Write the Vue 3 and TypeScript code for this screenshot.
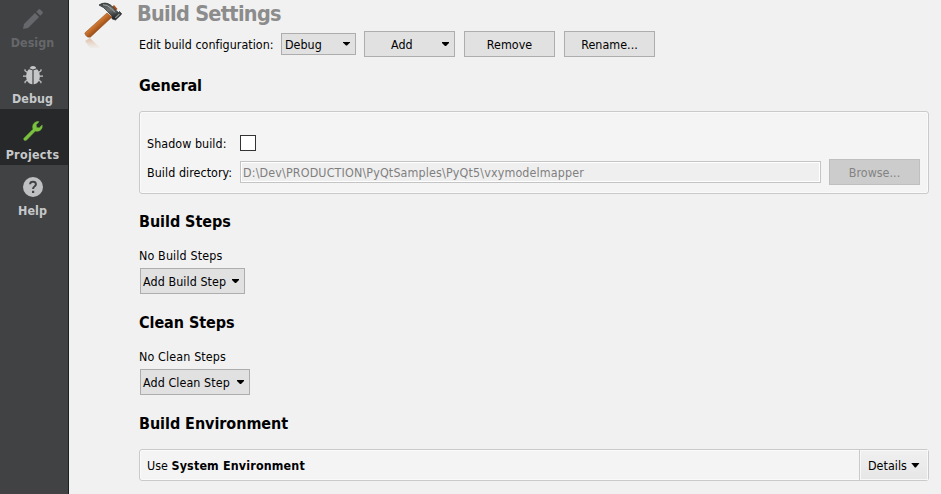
<script setup lang="ts">
interface Mode {
  id: string
  label: string
}
interface StepSection {
  title: string
  empty: string
  action: string
}

const modes: Mode[] = [
  { id: 'design', label: 'Design' },
  { id: 'debug', label: 'Debug' },
  { id: 'projects', label: 'Projects' },
  { id: 'help', label: 'Help' },
]
const steps: StepSection[] = [
  { title: 'Build Steps', empty: 'No Build Steps', action: 'Add Build Step' },
  { title: 'Clean Steps', empty: 'No Clean Steps', action: 'Add Clean Step' },
]
const buildDirectory = 'D:\\Dev\\PRODUCTION\\PyQtSamples\\PyQt5\\vxymodelmapper'
</script>

<template>
  <div class="window">
    <nav class="modes">
      <div v-for="m in modes" :key="m.id" class="mode" :class="m.id">
        <svg class="mode-icon" viewBox="0 0 24 24" width="24" height="24">
          <template v-if="m.id === 'design'">
            <path d="M2 22 3 17 14 6 18 10 7 21ZM15.3 4.7 17.6 2.4Q18.4 1.7 19.2 2.4L21.6 4.8Q22.3 5.6 21.6 6.4L19.3 8.7Z" fill="#66676a" />
          </template>
          <template v-else-if="m.id === 'debug'">
            <path d="M8.6 5.3A3.6 3.6 0 0 1 15.4 5.3L12 6.5Z" fill="#c4c6c8" />
            <path d="M11.4 7.3V21.3C7.2 20.7 5.2 17.7 5.2 13.5Q5.2 8.5 8 6.2ZM12.6 7.3V21.3C16.8 20.7 18.8 17.7 18.8 13.5Q18.8 8.5 16 6.2Z" fill="#c4c6c8" />
            <path d="M6.8 9.8 4 7.8V6.2M6 13.2H2M6.8 17 4.1 18.6V20.2M17.2 9.8 20 7.8V6.2M18 13.2H22M17.2 17 19.9 18.6V20.2" fill="none" stroke="#c4c6c8" stroke-width="1.2" />
          </template>
          <template v-else-if="m.id === 'projects'">
            <path d="M3.2 19 12 10.2C11.2 7.2 11.8 4.8 14 3.4Q15.8 2.2 18 2.7L15.1 5.8 15.6 8.4 18.2 8.9 21.2 6Q21.8 9.2 19.4 11.2 17.4 12.9 14.3 12.1L5.6 21.1Q4.3 22.1 3.1 21 2 19.9 3.2 19Z" fill="#7ac13e" stroke="#7ac13e" stroke-width=".5" />
          </template>
          <template v-else>
            <circle cx="12" cy="12" r="10" fill="#bec0c2" />
            <path d="M9.1 9.2Q9.2 6.8 12 6.8T14.9 9.2Q14.9 10.5 13.4 11.5 12.1 12.3 12.1 14" fill="none" stroke="#404244" stroke-width="2" />
            <rect x="11" y="15.8" width="2.2" height="2.2" fill="#404244" />
          </template>
        </svg>
        <span class="mode-label">{{ m.label }}</span>
      </div>
    </nav>

    <aside class="tool">
      <svg viewBox="0 0 42 50" width="42" height="50">
        <defs>
          <linearGradient id="wood" x1="0" y1="0" x2="1" y2="1">
            <stop offset=".25" stop-color="#efa258" />
            <stop offset=".48" stop-color="#c26b28" />
            <stop offset=".7" stop-color="#76330d" />
          </linearGradient>
          <linearGradient id="steel" x1="0" y1="0" x2=".4" y2="1">
            <stop offset="0" stop-color="#383b3c" />
            <stop offset=".5" stop-color="#6e7372" />
            <stop offset="1" stop-color="#202426" />
          </linearGradient>
          <linearGradient id="mirror" x1="0" y1="0" x2="0" y2="1">
            <stop offset="0" stop-color="#c98a5c" stop-opacity=".5" />
            <stop offset="1" stop-color="#d9a47d" stop-opacity=".05" />
          </linearGradient>
        </defs>
        <path d="M3 41 8 38 18 48H8Z" fill="url(#mirror)" />
        <path d="M2.8 33 25 13 30 17 8.5 37Q4 38 2.8 33Z" fill="url(#wood)" stroke="#94501f" stroke-width=".6" />
        <path d="M29 8 32 5 35.5 9 32 12Z" fill="#a84f18" />
        <path d="M17 5Q23 1 29 5.3L33.5 10 36.5 12.5 37.5 11.5 39.7 14 33.5 20 30 18.8 30 16 25.5 11.5Q22 7 17 5Z" fill="url(#steel)" stroke="#303334" stroke-width=".8" />
        <path d="M21 4.8Q25 4.3 29 8.3L33 12.4" fill="none" stroke="#a8acac" stroke-width="1" />
        <path d="M33.2 18 37.5 14" stroke="#8d9292" stroke-width="1.1" />
      </svg>
    </aside>

    <main class="page">
      <h1>Build Settings</h1>
      <div class="config">
        <span class="config-label">Edit build configuration:</span>
        <button class="btn select">Debug<i class="arrow"></i></button>
        <button class="btn wide add"><span>Add</span><i class="arrow"></i></button>
        <button class="btn wide">Remove</button>
        <button class="btn wide">Rename...</button>
      </div>

      <h2 class="low">General</h2>
      <section class="group general">
        <div class="field check-row">
          <label>Shadow build:</label>
          <span class="checkbox"></span>
        </div>
        <div class="field">
          <label>Build directory:</label>
          <div class="path">{{ buildDirectory }}</div>
          <button class="btn wide browse" disabled>Browse...</button>
        </div>
      </section>

      <template v-for="s in steps" :key="s.title">
        <h2>{{ s.title }}</h2>
        <p class="empty">{{ s.empty }}</p>
        <button class="btn step">{{ s.action }}<i class="arrow"></i></button>
      </template>

      <h2>Build Environment</h2>
      <section class="group env">
        <div class="summary">Use <b>System Environment</b></div>
        <div class="details">Details<i class="arrow"></i></div>
      </section>
    </main>
  </div>
</template>

<style>
body {
  margin: 0;
  overflow: hidden;
}
</style>

<style scoped>
.window {
  display: flex;
  width: 941px;
  height: 494px;
  overflow: hidden;
  background: #f1f1f1;
  color: #000;
  font: 12.4px/16px 'DejaVu Sans Condensed', 'DejaVu Sans', sans-serif;
  font-stretch: condensed;
  letter-spacing: 0.03px;
  white-space: nowrap;
}
.modes {
  box-sizing: border-box;
  flex: none;
  width: 69px;
  height: 494px;
  border-right: 1px solid #1e1f20;
  background: #404244;
}
.mode {
  display: flex;
  flex-direction: column;
  align-items: center;
  box-sizing: border-box;
  width: 68px;
  height: 56px;
  padding: 10px 3px 0 0;
  color: #c6c8ca;
}
.mode:first-child {
  height: 53px;
  padding-top: 7px;
}
.mode.design {
  color: #66676a;
}
.mode.projects {
  background: #262829;
}
.mode-icon {
  display: block;
  flex: none;
}
.mode-label {
  margin-top: 4px;
  font-weight: bold;
  line-height: 16px;
}
.projects .mode-label {
  letter-spacing: 0.3px;
}
.tool {
  flex: none;
  width: 57px;
  padding-left: 13px;
}
.tool svg {
  display: block;
}
.page {
  width: 790px;
}
h1 {
  height: 31px;
  margin: 0 0 0 -2px;
  color: #8c8c8c;
  font-size: 21.5px;
  letter-spacing: -0.7px;
  line-height: 27px;
}
h2 {
  height: 54px;
  margin: 0;
  font-size: 16px;
  letter-spacing: -0.05px;
  line-height: 55px;
}
h2.low {
  line-height: 57px;
}
.config {
  display: flex;
  align-items: center;
  height: 26px;
}
.config-label {
  width: 142px;
  padding-top: 1px;
}
.btn {
  display: flex;
  align-items: center;
  justify-content: center;
  flex: none;
  box-sizing: border-box;
  height: 26px;
  margin: 0;
  padding: 0;
  border: 1px solid #adadad;
  border-radius: 0;
  background: #e1e1e1;
  color: #000;
  font: inherit;
  letter-spacing: inherit;
}
.arrow {
  flex: none;
  width: 7px;
  height: 4px;
  background: #000;
  clip-path: polygon(0 0, 100% 0, 100% 1px, 4px 4px, 3px 4px, 0 1px);
}
.select {
  justify-content: space-between;
  width: 75px;
  height: 22px;
  padding: 1px 5px 0 3px;
}
.wide {
  width: 91px;
  margin-left: 9px;
  padding-top: 2px;
}
.wide.add {
  justify-content: space-between;
  margin-left: 8px;
  padding: 2px 5px 0 26px;
}
.select .arrow,
.add .arrow {
  margin-top: -2px;
}
.group {
  box-sizing: border-box;
  width: 790px;
  border: 1px solid #cacaca;
  border-radius: 3px;
  background: #f4f4f4;
  box-shadow: inset 0 0 0 1px #fafafa;
}
.general {
  height: 83px;
  padding: 23px 8px 0 7px;
}
.field {
  display: flex;
  align-items: center;
  height: 26px;
}
.check-row {
  height: 16px;
  margin-bottom: 8px;
}
.field label {
  width: 93px;
  padding-top: 2px;
  letter-spacing: 0.06px;
}
.checkbox {
  box-sizing: border-box;
  width: 16px;
  height: 16px;
  border: 1px solid #333;
  background: #fff;
}
.path {
  box-sizing: border-box;
  width: 581px;
  height: 22px;
  padding-left: 2px;
  border: 1px solid #c4c4c4;
  background: #efefef;
  box-shadow: inset 0 0 0 1px #fff;
  color: #7f7f7f;
  letter-spacing: 0.15px;
  line-height: 22px;
}
.wide.browse {
  margin-left: 8px;
  border-color: #bfbfbf;
  background: #ccc;
  color: #838383;
}
.empty {
  height: 20px;
  margin: 0;
  letter-spacing: 0.14px;
}
.step {
  justify-content: space-between;
  width: 105px;
  margin: 0 0 1px 1px;
  padding: 2px 5px 0 2px;
  letter-spacing: 0.08px;
}
.step ~ .step {
  width: 110px;
}
.step .arrow {
  margin-top: -2px;
}
.env {
  display: flex;
  height: 32px;
  margin-top: -1px;
}
.summary {
  flex: 1;
  padding-left: 7px;
  line-height: 32px;
}
.summary b {
  letter-spacing: 0.16px;
}
.details {
  display: flex;
  align-items: center;
  box-sizing: border-box;
  gap: 4px;
  width: 69px;
  padding: 2px 0 0 8px;
  border-left: 1px solid #cacaca;
  background: linear-gradient(#f0f0f0, #e6e6e6);
  box-shadow: inset 0 0 0 1px #f8f8f8;
}
.details .arrow {
  width: 9px;
  height: 5px;
  margin-top: -2px;
  clip-path: polygon(0 0, 100% 0, 5px 5px, 4px 5px);
}
</style>
